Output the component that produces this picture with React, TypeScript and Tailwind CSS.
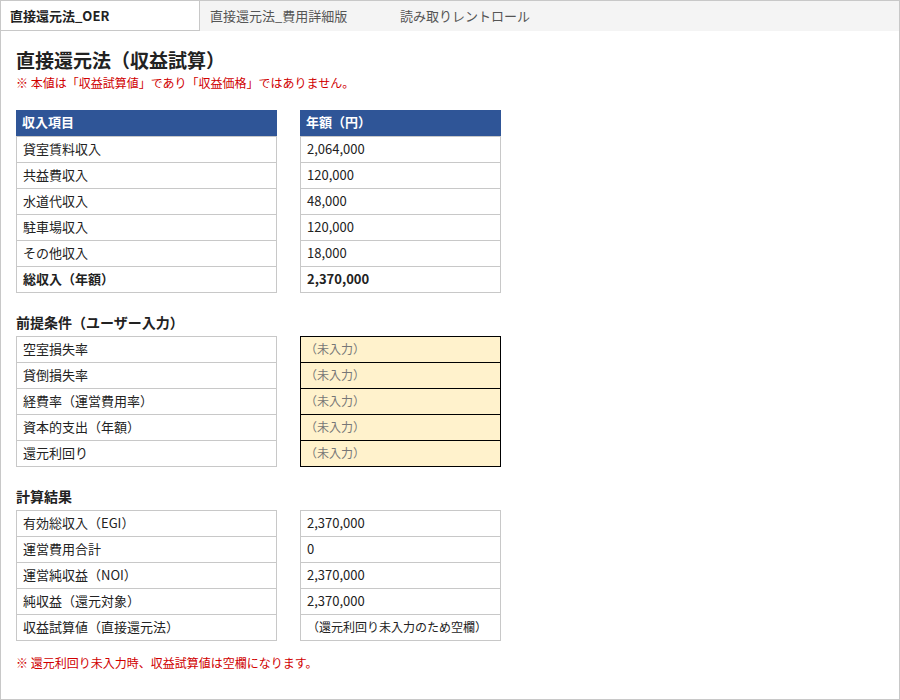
const font = { fontFamily: '"Noto Sans CJK JP", "Noto Sans", sans-serif' };

const income = [
  ["貸室賃料収入", "2,064,000"],
  ["共益費収入", "120,000"],
  ["水道代収入", "48,000"],
  ["駐車場収入", "120,000"],
  ["その他収入", "18,000"],
];

const inputs = ["空室損失率", "貸倒損失率", "経費率（運営費用率）", "資本的支出（年額）", "還元利回り"];

const results = [
  ["有効総収入（EGI）", "2,370,000"],
  ["運営費用合計", "0"],
  ["運営純収益（NOI）", "2,370,000"],
  ["純収益（還元対象）", "2,370,000"],
];

function Cell({ children, first, bold }: { children: React.ReactNode; first?: boolean; bold?: boolean }) {
  return (
    <div
      className={`flex items-center px-[6px] pb-[2px] border-x border-b border-[#c8c8c8] text-[13px] text-[#222] ${
        first ? "border-t h-[27px]" : "h-[26px]"
      } ${bold ? "font-bold" : ""}`}
    >
      {children}
    </div>
  );
}

export default function App() {
  return (
    <div className="w-[900px] h-[700px] border border-[#c8c8c8] bg-white overflow-hidden" style={font}>
      <div className="flex h-[30px] bg-[#f4f4f4] text-[13px]">
        <div className="w-[199px] bg-white border-r border-b border-[#c8c8c8] flex items-center px-[9px] font-bold text-[#222]">
          直接還元法_OER
        </div>
        <div className="w-[190px] flex items-center px-[10px] text-[#555]">直接還元法_費用詳細版</div>
        <div className="flex items-center px-[10px] text-[#555]">読み取りレントロール</div>
      </div>

      <div className="px-[15px]">
        <h1 className="mt-[15px] text-[19px] leading-[28px] font-bold text-[#222]">直接還元法（収益試算）</h1>
        <p className="text-[12px] leading-[18px] text-[#d00000]">※ 本値は「収益試算値」であり「収益価格」ではありません。</p>

        <div className="mt-[18px] flex gap-[23px]">
          <div className="w-[261px]">
            <div className="h-[26px] pb-[2px] bg-[#2f5597] text-white font-bold text-[13px] flex items-center px-[6px]">
              収入項目
            </div>
            {income.map(([k], i) => (
              <Cell key={k} first={i === 0}>
                {k}
              </Cell>
            ))}
            <Cell bold>総収入（年額）</Cell>
          </div>
          <div className="w-[201px]">
            <div className="h-[26px] pb-[2px] bg-[#2f5597] text-white font-bold text-[13px] flex items-center px-[6px]">
              年額（円）
            </div>
            {income.map(([k, v], i) => (
              <Cell key={k} first={i === 0}>
                {v}
              </Cell>
            ))}
            <Cell bold>2,370,000</Cell>
          </div>
        </div>

        <h2 className="mt-[19px] mb-[4px] text-[14px] leading-[20px] font-bold text-[#222]">前提条件（ユーザー入力）</h2>
        <div className="flex gap-[23px]">
          <div className="w-[261px]">
            {inputs.map((k, i) => (
              <Cell key={k} first={i === 0}>
                {k}
              </Cell>
            ))}
          </div>
          <div className="w-[201px]">
            {inputs.map((k, i) => (
              <div
                key={k}
                className={`flex items-center px-[4px] pb-[2px] bg-[#fff2cc] border-x border-b border-black text-[12px] text-[#777] ${
                  i === 0 ? "border-t h-[27px]" : "h-[26px]"
                }`}
              >
                （未入力）
              </div>
            ))}
          </div>
        </div>

        <h2 className="mt-[19px] mb-[4px] text-[14px] leading-[20px] font-bold text-[#222]">計算結果</h2>
        <div className="flex gap-[23px]">
          <div className="w-[261px]">
            {results.map(([k], i) => (
              <Cell key={k} first={i === 0}>
                {k}
              </Cell>
            ))}
            <Cell>収益試算値（直接還元法）</Cell>
          </div>
          <div className="w-[201px]">
            {results.map(([k, v], i) => (
              <Cell key={k} first={i === 0}>
                {v}
              </Cell>
            ))}
            <div className="h-[26px] pb-[2px] flex items-center px-[6px] border-x border-b border-[#c8c8c8] text-[12px] text-[#222]">
              （還元利回り未入力のため空欄）
            </div>
          </div>
        </div>

        <p className="mt-[13px] text-[12px] leading-[18px] text-[#d00000]">※ 還元利回り未入力時、収益試算値は空欄になります。</p>
      </div>
    </div>
  );
}
